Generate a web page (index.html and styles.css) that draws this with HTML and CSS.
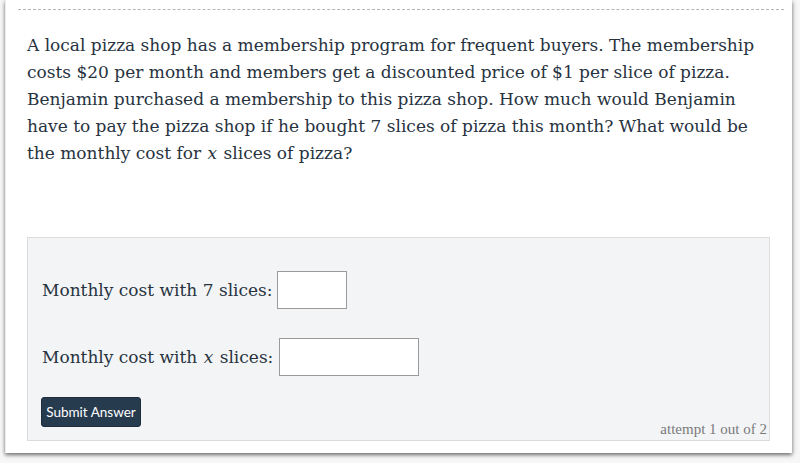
FILE: index.html
```html
<!DOCTYPE html>
<html>
<head>
<meta charset="utf-8">
<link rel="stylesheet" href="styles.css">
</head>
<body>
<div class="card">
  <div class="rule"></div>
  <p class="question">A local pizza shop has a membership program for frequent buyers. The membership costs $20 per month and members get a discounted price of $1 per slice of pizza. Benjamin purchased a membership to this pizza shop. How much would Benjamin have to pay the pizza shop if he bought 7 slices of pizza this month? What would be the monthly cost for <span class="mvar">x</span> slices of pizza?</p>
  <div class="answer">
    <div class="row"><span class="label">Monthly cost with 7 slices:</span><span class="box box-short"></span></div>
    <div class="row"><span class="label">Monthly cost with <span class="mvar">x</span> slices:</span><span class="box box-long"></span></div>
    <div class="actions">
      <button class="submit">Submit Answer</button>
      <span class="attempt">attempt 1 out of 2</span>
    </div>
  </div>
</div>
</body>
</html>
```
FILE: styles.css
```css
html, body { margin: 0; padding: 0; }
body {
  background: #f7f7f7;
  width: 800px;
  height: 463px;
  overflow: hidden;
}
.card {
  margin-left: 5px;
  width: 787px;
  height: 453px;
  background: #fff;
  border-left: 1px solid #ececec;
  box-shadow: 0 2px 4px rgba(0,0,0,0.55), 2px 0 6px rgba(0,0,0,0.06);
  box-sizing: border-box;
  padding: 9px 0 0 21px;
}
.rule {
  width: 766px;
  margin-left: -9px;
  border-top: 1px dashed #b5b5b5;
}
.question {
  margin: 22px 0 0 0;
  width: 745px;
  font-family: "DejaVu Serif", serif;
  font-size: 17px;
  line-height: 27px;
  color: #27333f;
}
.mvar { font-style: italic; padding: 0 1px; }
.answer {
  margin-top: 70px;
  width: 743px;
  height: 204px;
  box-sizing: border-box;
  background: #f3f4f6;
  border: 1px solid #dcdcdc;
  padding: 33px 0 0 14px;
  font-family: "DejaVu Serif", serif;
  font-size: 17px;
  color: #27333f;
}
.row {
  display: flex;
  align-items: center;
  gap: 4px;
  height: 38px;
  margin-bottom: 29px;
}
.box {
  display: inline-block;
  height: 38px;
  box-sizing: border-box;
  background: #fff;
  border: 1px solid #9a9a9a;
}
.box-short { width: 70px; }
.box-long { width: 140px; margin-left: 2px; }
.actions {
  display: flex;
  justify-content: space-between;
  align-items: flex-start;
  margin-top: -8px;
}
.submit {
  width: 100px;
  height: 30px;
  background: #273b4f;
  color: #fff;
  border: 1px solid #1d2d3c;
  border-radius: 3px;
  font-family: Lato, sans-serif;
  font-size: 13.5px;
  padding: 0;
  margin-left: -1px;
}
.attempt {
  margin-top: 24px;
  margin-right: 2px;
  font-family: "Liberation Serif", serif;
  font-size: 15px;
  color: #7a7a7a;
}
```
